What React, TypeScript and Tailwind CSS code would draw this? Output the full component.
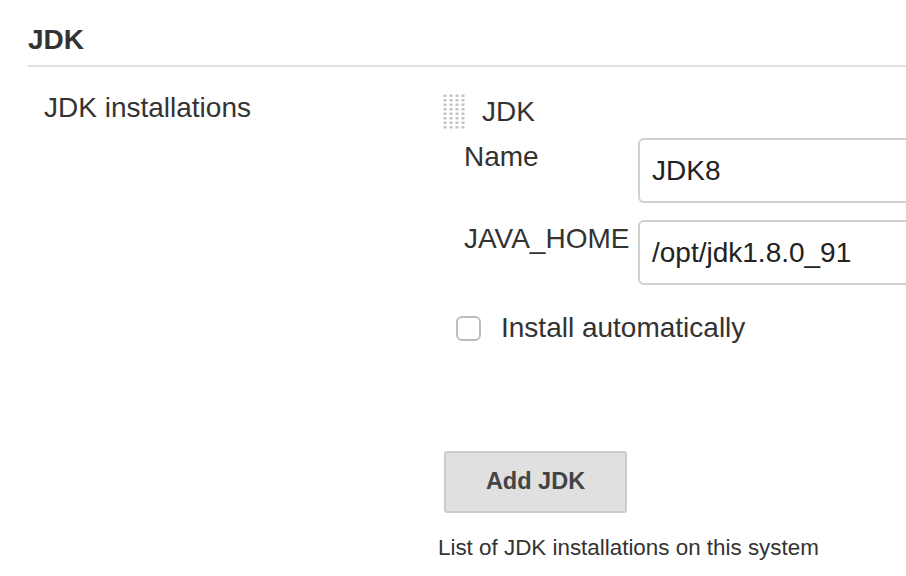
import React from 'react';

// 拖动手柄（点阵）
const DragHandle = () => {
  const dots = [];
  for (let r = 0; r < 8; r++) {
    for (let c = 0; c < 4; c++) {
      dots.push(<rect key={`${r}-${c}`} x={c * 6 + 0.5} y={r * 4.5 + 0.5} width={3} height={2.5} fill="#c4c4c4" />);
    }
  }
  return (
    <svg width="24" height="36" viewBox="0 0 24 36" className="shrink-0">
      {dots}
    </svg>
  );
};

const FieldRow = ({ label, value, className }: { label: string; value: string; className?: string }) => (
  <div className={`flex items-start ${className ?? ''}`}>
    <div className="w-[200px] shrink-0 pl-[26px] pt-[3px] leading-[32px]">{label}</div>
    <div className="h-[65px] w-[400px] shrink-0 rounded-[6px] border-2 border-[#d0d0d0] pl-[12px] leading-[61px] text-[#222]">
      {value}
    </div>
  </div>
);

const App = () => {
  return (
    <div
      className="h-[576px] w-[906px] overflow-hidden bg-white text-[28px] text-[#333]"
      style={{ fontFamily: '"Liberation Sans", Arial, sans-serif' }}
    >
      <div className="ml-[28px] border-b-2 border-[#e0e0e0] pb-[9px] pt-[24px]">
        <h2 className="text-[28px] font-bold leading-[32px] text-[#333]">JDK</h2>
      </div>

      <div className="flex pt-[25px]">
        <div className="w-[438px] shrink-0 pl-[44px] leading-[32px]">JDK installations</div>

        <div className="flex flex-col">
          <div className="flex h-[40px] items-center pl-[5px]">
            <DragHandle />
            <span className="ml-[15px] leading-[32px]">JDK</span>
          </div>

          <FieldRow label="Name" value="JDK8" className="mt-[6px]" />
          <FieldRow label="JAVA_HOME" value="/opt/jdk1.8.0_91" className="mt-[17px]" />

          <label className="mt-[27px] flex h-[32px] items-center pl-[18px]">
            <span className="h-[25px] w-[25px] shrink-0 rounded-[6px] border-2 border-[#bdbdbd] bg-white" />
            <span className="ml-[20px] leading-[32px]">Install automatically</span>
          </label>

          <div className="mt-[107px] pl-[6px]">
            <button className="h-[62px] w-[183px] rounded-[3px] border-2 border-[#cccccc] bg-[#e0e0e0] text-[23.5px] font-bold text-[#444]">
              Add JDK
            </button>
          </div>

          <p className="mt-[22px] whitespace-nowrap text-[22.4px] leading-[26px] text-[#333]">
            List of JDK installations on this system
          </p>
        </div>
      </div>
    </div>
  );
};

export default App;
